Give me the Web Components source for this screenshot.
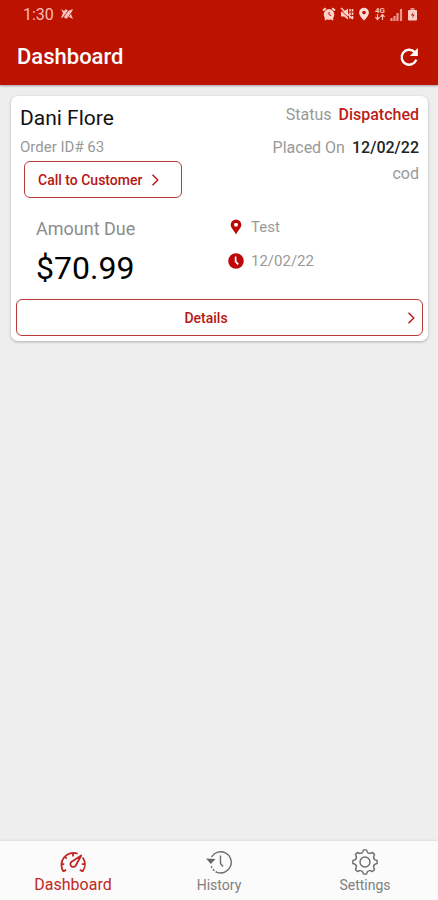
<!DOCTYPE html>
<html lang="en">
<head>
<meta charset="utf-8">
<meta name="viewport" content="width=device-width, initial-scale=1">
<title>Dashboard</title>
<style>
html, body { margin: 0; height: 100%; }
body { font-family: Roboto, "Noto Sans", sans-serif; background: #eeeeee; }
</style>
</head>
<body>
<delivery-app></delivery-app>
<script>
const define = (name, html) => {
  const tpl = document.createElement('template');
  tpl.innerHTML = html;
  customElements.define(name, class extends HTMLElement {
    constructor() {
      super();
      this.attachShadow({ mode: 'open' }).append(tpl.content.cloneNode(true));
    }
  });
};

/* Closed outline of an eight-toothed gear centred on (13,13). */
const gearPath = () => {
  const pt = (deg, r) => {
    const a = deg * Math.PI / 180;
    return (13 + r * Math.sin(a)).toFixed(2) + ' ' + (13 - r * Math.cos(a)).toFixed(2);
  };
  let d = '';
  for (let i = 0; i < 8; i++) {
    const a = i * 45;
    d += (i ? 'L' : 'M') + pt(a - 7, 12.2) + 'L' + pt(a + 7, 12.2) +
         'L' + pt(a + 12, 10.4) + 'Q' + pt(a + 22.5, 8.8) + ' ' + pt(a + 33, 10.4);
  }
  return d + 'Z';
};

const icons = {
  muted: ['0 0 14 12', '<path d="M1 1l3 2 2-2 2 2 5-2-2 5 2 5-4-2-3 2-2-2-3 1 2-5z" fill="#f6c4bf"/><path d="M2 11L8 3M7 11l5-7" stroke="#bc1200" stroke-width=".8"/>'],
  alarm: ['0 0 14 14', '<path d="M1 3.6L3.8 1.2M10.2 1.2L13 3.6M3 12.8l1.3-1.5M11 12.8l-1.3-1.5" stroke="#ffd0ca" stroke-width="2"/><circle cx="7" cy="7.4" r="5.3" fill="#ffd0ca"/><path d="M7 5v2.600l2 1" fill="none" stroke="#bc1200"/>'],
  silent: ['0 0 14 14', '<path d="M1 4.500h3L8 1.500v11L4 9.500H1z" fill="#ffd0ca"/><path d="M10 2v10M12.500 2v10" stroke="#ffd0ca" stroke-width="1.600" stroke-dasharray="2.500 1"/><path d="M1 1l12 11" stroke="#ffd0ca" stroke-width="1.500"/><path d="M1 3.500l7 6.500" stroke="#bc1200" stroke-width=".8"/>'],
  place: ['0 0 12 14', '<path d="M6 .8a4.900 4.900 0 0 0-4.900 4.900C1.100 9 6 13.400 6 13.400S10.900 9 10.900 5.700A4.900 4.900 0 0 0 6 .8z" fill="#ffddd9"/><circle cx="6" cy="5.600" r="1.800" fill="#bc1200"/>'],
  arrows: ['0 0 12 7', '<path d="M3.500 0v5M1.400 3.200l2.100 2.300 2.100-2.300M8.500 6V1M6.400 2.800L8.500.5l2.100 2.300" fill="none" stroke="#ffc0b9" stroke-width="1.200"/>'],
  signal: ['0 0 13 13', '<path d="M1.500 13v-3M4.500 13V8M7.500 13V5M11 13V1" stroke="#f1958c" stroke-width="2.200"/>'],
  battery: ['0 0 11 14', '<path d="M3.500 2h4" stroke="#e98b80" stroke-width="2"/><rect x="1" y="3" width="9" height="10.500" rx="1" fill="#ffd0ca"/><path d="M6.500 4.500L4 8.500h2L5 12l2.600-4.400h-2z" fill="#bc1200"/>'],
  refresh: ['0 0 20 20', '<path d="M17.300 12.600A7.500 7.500 0 1 1 15.500 4.900" fill="none" stroke="#fff" stroke-width="2.400"/><path d="M18.800.9v8h-8z" fill="#fff"/>'],
  chevron: ['0 0 8 12', '<path d="M1.500.7L6.800 6l-5.300 5.300" fill="none" stroke="currentColor" stroke-width="1.400"/>'],
  pin: ['0 0 12 16', '<path d="M6 .5A5.300 5.300 0 0 0 .7 5.800C.7 9 4.500 12 6 15.500 7.500 12 11.300 9 11.300 5.800A5.300 5.300 0 0 0 6 .5z" fill="#bd0808"/><rect x="4.200" y="4" width="3.600" height="3.400" rx="1" fill="#fff"/>'],
  clock: ['0 0 16 16', '<circle cx="8" cy="8" r="7.800" fill="#bd0808"/><path d="M7.600 3.500v5l2.600 2.800" fill="none" stroke="#fff" stroke-width="1.700"/>'],
  gauge: ['0 0 28 22', '<g fill="none" stroke="#bf2822" stroke-width="1.800"><path d="M4.500 20.600A12 12 0 0 1 18.600 2.600M23.700 6.500a12 12 0 0 1-.2 14.100M14 2v3.500M2.200 13.200h3M22.800 13.200h3M5.700 5.500l2 2.100M4.400 20.500l2.700-1.800M23.600 20.500l-2.700-1.800"/><path d="M22.200 4.500L16.800 14.500a2.900 2.900 0 1 1-4.200-3.800z" stroke-linejoin="round"/></g>'],
  history: ['0 0 28 24', '<g fill="none" stroke="#6c6c6c" stroke-width="1.400"><path d="M6.500 7A10.600 10.600 0 1 1 12 22.300"/><path d="M6.200 16.200A10.600 10.600 0 0 0 12 22.300" stroke-dasharray="2 1.500"/><path d="M15.500 5.500v8l2.500 3"/></g><path d="M1 8.600l9.500.5-4.700 4.800z" fill="#666"/>'],
  gear: ['0 0 26 26', '<g fill="none" stroke="#6c6c6c" stroke-width="1.400" stroke-linejoin="round"><path d="' + gearPath() + '"/><circle cx="13" cy="13" r="5"/></g>']
};

customElements.define('app-icon', class extends HTMLElement {
  constructor() {
    super();
    this.attachShadow({ mode: 'open' });
  }
  connectedCallback() {
    const [box, art] = icons[this.getAttribute('name')];
    const [, , w, h] = box.split(' ');
    this.shadowRoot.innerHTML =
      `<style>:host{display:block;flex:none}svg{display:block}</style>
       <svg width="${w}" height="${h}" viewBox="${box}" aria-hidden="true">${art}</svg>`;
  }
});

define('status-bar', `
<style>
:host { display: flex; align-items: center; justify-content: space-between; height: 28px; padding: 0 20px 0 23px; color: #f6bdb6; font-size: 16px; }
.group { display: flex; align-items: center; gap: 6px; }
.right { gap: 4px; }
.net { display: flex; flex-direction: column; align-items: center; font-size: 8px; line-height: 7px; font-weight: 700; }
</style>
<div class="group"><span>1:30</span><app-icon name="muted"></app-icon></div>
<div class="group right">
  <app-icon name="alarm"></app-icon><app-icon name="silent"></app-icon><app-icon name="place"></app-icon>
  <div class="net"><span>4G</span><app-icon name="arrows"></app-icon></div>
  <app-icon name="signal"></app-icon><app-icon name="battery"></app-icon>
</div>`);

define('app-header', `
<style>
:host { display: block; background: #bc1200; box-shadow: 0 1px 2px #0005; }
.bar { display: flex; align-items: center; justify-content: space-between; height: 57px; padding: 0 19px 0 17px; }
h1 { margin: 0; font-size: 22px; line-height: 28px; font-weight: 500; color: #fff; }
button { display: block; margin: 0; padding: 0; border: 0; background: none; }
</style>
<status-bar></status-bar>
<div class="bar"><h1><slot></slot></h1><button type="button" aria-label="Refresh"><app-icon name="refresh"></app-icon></button></div>`);

define('outline-button', `
<style>
:host { display: block; }
button { display: flex; align-items: center; gap: 9px; width: 100%; height: 37px; margin: 0; padding: 0 7px 0 13px; border: 1px solid #b93a36; border-radius: 6px; background: #fff; color: #b71611; font: 500 14px/20px Roboto, "Noto Sans", sans-serif; }
:host([wide]) button { padding-left: 0; gap: 12px; }
:host([wide]) span { flex: 1; }
</style>
<button type="button"><span><slot></slot></span><app-icon name="chevron"></app-icon></button>`);

define('labelled-value', `
<style>
:host { display: flex; align-items: center; justify-content: flex-end; gap: 7px; font-size: 16px; line-height: 20px; color: #999; }
::slotted(b) { font-weight: 500; color: #222; }
::slotted(b.alert) { color: #bd1c18; }
</style>
<slot></slot>`);

define('icon-line', `
<style>
:host { display: grid; grid-template-columns: 16px 1fr; justify-items: center; align-items: center; gap: 7px; font-size: 15px; line-height: 20px; color: #999; }
span { justify-self: start; }
</style>
<slot name="icon"></slot><span><slot></slot></span>`);

define('order-card', `
<style>
:host { display: block; padding: 8px 5px 5px; border-radius: 7px; background: #fff; box-shadow: 0 1px 3px #0004; }
.top { display: flex; justify-content: space-between; padding: 0 4px; }
h2 { margin: 0; font-size: 21px; line-height: 28px; font-weight: 400; color: #111; }
p { margin: 0; }
.order { margin: 5px 0 4px; font-size: 15px; line-height: 20px; color: #999; }
outline-button.call { margin-left: 4px; width: 158px; }
.meta { display: flex; flex-direction: column; padding-top: 1px; }
.meta .placed { margin: 13px 0 6px; }
.info { display: grid; grid-template-columns: 192px 1fr; padding: 19px 4px 11px 20px; }
.amount { font-size: 18px; line-height: 24px; color: #8c8c8c; }
.price { margin-top: 7px; font-size: 32px; line-height: 40px; color: #000; }
.lines { display: flex; flex-direction: column; gap: 14px; }
</style>
<div class="top">
  <div><h2>Dani Flore</h2><p class="order">Order ID# 63</p><outline-button class="call">Call to Customer</outline-button></div>
  <div class="meta">
    <labelled-value><span>Status</span><b class="alert">Dispatched</b></labelled-value>
    <labelled-value class="placed"><span>Placed On</span><b>12/02/22</b></labelled-value>
    <labelled-value><span>cod</span></labelled-value>
  </div>
</div>
<div class="info">
  <div><p class="amount">Amount Due</p><p class="price">$70.99</p></div>
  <div class="lines">
    <icon-line><app-icon slot="icon" name="pin"></app-icon>Test</icon-line>
    <icon-line><app-icon slot="icon" name="clock"></app-icon>12/02/22</icon-line>
  </div>
</div>
<outline-button wide>Details</outline-button>`);

define('nav-item', `
<style>
:host { display: block; flex: 1; }
a { display: flex; flex-direction: column; align-items: center; color: #808080; text-decoration: none; font-size: 14px; line-height: 20px; }
.pic { display: flex; align-items: center; height: 26px; }
:host([active]) a { color: #bf2822; font-size: 16px; }
</style>
<a href="#"><span class="pic"><slot name="icon"></slot></span><span><slot></slot></span></a>`);

define('tab-bar', `
<style>
:host { display: block; background: #fbfbfb; box-shadow: 0 -1px 2px #0001; }
nav { display: flex; padding: 8px 0 5px; }
</style>
<nav aria-label="Main">
  <nav-item active><app-icon slot="icon" name="gauge"></app-icon>Dashboard</nav-item>
  <nav-item><app-icon slot="icon" name="history"></app-icon>History</nav-item>
  <nav-item><app-icon slot="icon" name="gear"></app-icon>Settings</nav-item>
</nav>`);

define('delivery-app', `
<style>
:host { display: flex; flex-direction: column; min-height: 100vh; }
main { flex: 1; padding: 11px 10px 11px 11px; }
</style>
<app-header>Dashboard</app-header>
<main><order-card></order-card></main>
<tab-bar></tab-bar>`);
</script>
</body>
</html>
